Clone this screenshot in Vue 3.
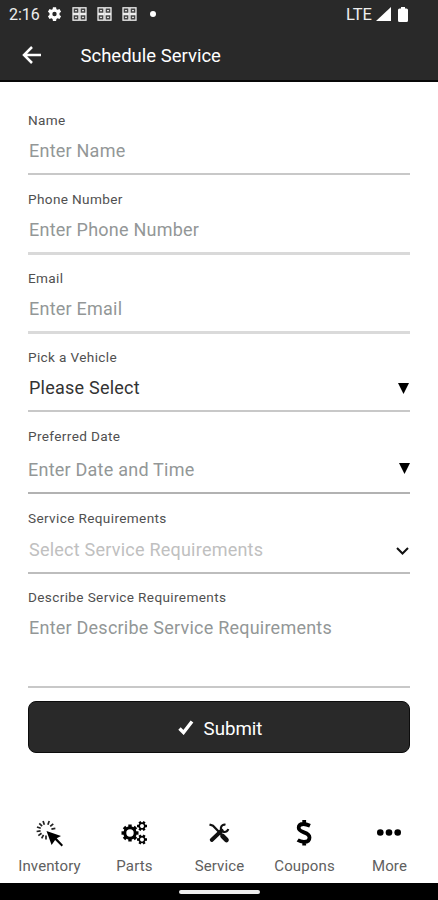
<script setup>
const fields = [
  { key: 'name', label: 'Name', value: 'Enter Name' },
  { key: 'phone', label: 'Phone Number', value: 'Enter Phone Number' },
  { key: 'email', label: 'Email', value: 'Enter Email' },
  { key: 'vehicle', label: 'Pick a Vehicle', value: 'Please Select', icon: 'triangle' },
  { key: 'date', label: 'Preferred Date', value: 'Enter Date and Time', icon: 'triangle' },
  { key: 'service', label: 'Service Requirements', value: 'Select Service Requirements', icon: 'chevron' },
  { key: 'describe', label: 'Describe Service Requirements', value: 'Enter Describe Service Requirements' },
]
const rays = [20, 50, 80, 180, 207, 234, 261, 288, 315, 342]
const gearTeeth = [0, 45, 90, 135, 180, 225, 270, 315]
const smallTeeth = [30, 90, 150, 210, 270, 330]
</script>

<template>
  <div class="screen">
    <header class="top">
      <div class="status">
        <span class="time">2:16</span>
        <svg class="cog" viewBox="0 0 24 24"><path fill="#fff" fill-rule="evenodd" d="M9.500 1h5l.6 3.200 1.800 1 3.100-1.100 2.500 4.300-2.500 2.100v2.900l2.500 2.200-2.500 4.300-3.100-1.100-1.800 1-.6 3.200h-5l-.6-3.200-1.800-1L4 19.900l-2.500-4.300L4 13.400v-2.900L1.500 8.400 4 4.100l3.100 1.100 1.800-1zM12 8.500a3.500 3.500 0 1 0 0 7 3.500 3.500 0 0 0 0-7z" /></svg>
        <svg v-for="n in 3" :key="n" class="notif" viewBox="0 0 15 14">
          <g fill="#444" stroke="#eee" stroke-width="1.300">
            <rect x="1" y=".8" width="6" height="5.600" /><rect x="8" y=".8" width="6" height="5.600" />
            <rect x="1" y="7.600" width="6" height="5.600" /><rect x="8" y="7.600" width="6" height="5.600" />
          </g>
          <path stroke="#ddd" stroke-width="1.300" d="M3 3.700h2M10 3.700h2M3 10.300h2M10 10.300h2" />
        </svg>
        <span class="dot"></span>
        <span class="lte">LTE</span>
        <svg class="signal" viewBox="0 0 15 14"><path fill="#fff" d="M15 0v14H0z" /></svg>
        <svg class="battery" viewBox="0 0 10 15"><path fill="#fff" d="M3 0h4v1.500h1.500Q10 1.500 10 3v10.500Q10 15 8.500 15h-7Q0 15 0 13.500V3q0-1.500 1.500-1.500H3z" /></svg>
      </div>
      <div class="bar">
        <svg class="back" viewBox="0 0 20 18"><path d="M19 9H2.500M10 1 2 9l8 8" fill="none" stroke="#fff" stroke-width="2.500" /></svg>
        <h1>Schedule Service</h1>
      </div>
    </header>

    <main>
      <div v-for="f in fields" :key="f.key" class="field" :class="f.key">
        <div class="label"><span>{{ f.label }}</span></div>
        <div class="value">
          <span>{{ f.value }}</span>
          <svg v-if="f.icon === 'triangle'" class="tri" viewBox="0 0 11 11"><path d="M0 0h11L5.500 11z" /></svg>
          <svg v-if="f.icon === 'chevron'" class="chev" viewBox="0 0 13 8"><path d="m1 1 5.500 5.500L12 1" fill="none" stroke="#111" stroke-width="2" /></svg>
        </div>
      </div>
      <button class="submit">
        <svg viewBox="0 0 16 15"><path d="m1.500 8.500 4 4L14 1.500" fill="none" stroke="#fff" stroke-width="3.400" /></svg>
        <span>Submit</span>
      </button>
    </main>

    <nav>
      <div class="tab">
        <svg class="icon" viewBox="0 0 32 32">
          <g stroke="#222" stroke-width="1.700">
            <path v-for="r in rays" :key="r" d="M0-5.500V-9.500" :transform="`translate(13 13) rotate(${r})`" />
          </g>
          <path d="m13.500 14 14.500 5-4.300 2.300 6.300 6.800-1.400 1.400-6.500-6.600-3.500 5z" />
        </svg>
        <span>Inventory</span>
      </div>
      <div class="tab">
        <svg class="icon" viewBox="0 0 32 32">
          <circle cx="12" cy="16" r="5.200" fill="none" stroke="#000" stroke-width="3" />
          <path v-for="t in gearTeeth" :key="t" d="M-1.700-5.500v-3h3.400v3z" :transform="`translate(12 16) rotate(${t})`" />
          <g v-for="y in [9, 22.500]" :key="y" :transform="`translate(24 ${y})`">
            <circle r="2.800" fill="none" stroke="#000" stroke-width="1.700" />
            <path v-for="t in smallTeeth" :key="t" d="M-1.200-3v-2h2.400v2z" :transform="`rotate(${t})`" />
          </g>
        </svg>
        <span>Parts</span>
      </div>
      <div class="tab">
        <svg class="icon" viewBox="0 0 32 32">
          <path d="m6.500 7.500 3.500 1.200 9 9.300" fill="none" stroke="#111" stroke-width="2.200" />
          <path d="m19.500 19 4 4" stroke="#111" stroke-width="4.600" stroke-linecap="round" />
          <path d="m8.700 23 10-9.500" stroke="#111" stroke-width="3.800" stroke-linecap="round" />
          <path d="M22.500 7.700a3.700 3.700 0 1 0 2.700 4.300" fill="none" stroke="#111" stroke-width="2.200" />
        </svg>
        <span>Service</span>
      </div>
      <div class="tab">
        <svg class="icon" viewBox="0 0 32 32"><path d="M22 8.700C19.500 7.600 17.500 7 15.500 7c-3 0-4.800 1.500-4.800 3.800 0 5.500 10.800 3.700 10.800 9.600 0 2.800-2.200 4.400-5.500 4.400-2.300 0-4.600-.7-6.300-1.800M16.200 3v4M16.200 24v4.500" fill="none" stroke="#000" stroke-width="3.800" /></svg>
        <span>Coupons</span>
      </div>
      <div class="tab">
        <svg class="icon" viewBox="0 0 32 32"><circle cx="7.300" cy="15.500" r="3.300" /><circle cx="16" cy="15.500" r="3.300" /><circle cx="24.700" cy="15.500" r="3.300" /></svg>
        <span>More</span>
      </div>
    </nav>
    <footer><div class="handle"></div></footer>
  </div>
</template>

<style>
body { margin: 0; background: #fff; }
</style>

<style scoped>
* { box-sizing: border-box; }
.screen { width: 438px; height: 900px; display: flex; flex-direction: column; background: #fff; font-family: Roboto, sans-serif; color: #222; overflow: hidden; }
svg { display: block; flex: none; }
.top { height: 82px; flex: none; background: #292929; border-bottom: 2px solid #080808; color: #fff; }
.status { height: 28px; display: flex; align-items: center; padding: 0 30px 0 9px; }
.time { font-size: 16px; width: 38px; white-space: nowrap; color: #eee; }
.cog { width: 15px; height: 16px; margin-right: 10px; }
.notif { width: 15px; height: 14px; margin-right: 10px; }
.dot { width: 6px; height: 6px; border-radius: 50%; background: #fff; margin-left: 3px; }
.lte { margin-left: auto; font-size: 16.500px; margin-right: 4px; color: #eee; }
.signal { width: 15px; height: 14px; margin-right: 7px; }
.battery { width: 10px; height: 15px; }
.bar { height: 54px; display: flex; align-items: center; padding-left: 22px; }
.back { width: 20px; height: 18px; margin-right: 38.500px; }
h1 { margin: 2px 0 0; font-size: 18.500px; font-weight: 400; white-space: nowrap; }
main { padding: 14px 28px 0; flex: 1; }
.field { height: 80px; border-bottom: 2px solid #c8c8c8; padding-top: 14px; }
.label { height: 20px; line-height: 20px; font-size: 13.600px; color: #505050; letter-spacing: .36px; white-space: nowrap; }
.value { height: 24px; margin-top: 9px; padding-left: 1px; display: flex; align-items: center; justify-content: space-between; font-size: 18px; line-height: 24px; color: #939797; letter-spacing: .23px; white-space: nowrap; }
.name { height: 79px; }
.phone { border-bottom: 3px solid #d9d9d9; }
.email { height: 79px; padding-top: 13px; border-bottom: 3px solid #dadada; }
.vehicle { height: 78px; padding-top: 13px; }
.vehicle .value { color: #333; }
.date { height: 82px; border-bottom-color: #b2b2b2; }
.date .value { margin-top: 12px; padding-left: 0; }
.date .tri { margin: -3px 0 0; }
.service { border-bottom-color: #bdbdbd; }
.service .value { margin-top: 10px; color: #c0c0c0; }
.describe { height: 114px; padding-top: 13px; }
.tri { width: 11px; height: 11px; margin-right: 1px; margin-top: 1px; }
.chev { width: 13px; height: 8px; margin-right: 1px; margin-top: 2px; }
.submit { width: 382px; height: 52px; margin-top: 13px; border: 1px solid #0c0c0c; border-radius: 8px; background: #292929; color: #fff; display: flex; align-items: center; justify-content: center; font: 400 18.700px Roboto, sans-serif; padding: 3px 0 0 2px; }
.submit svg { width: 16px; height: 15px; margin-right: 10px; margin-top: -2px; }
nav { height: 66px; flex: none; display: flex; padding: 0 7px 0 6px; }
.tab { flex: 1; display: flex; flex-direction: column; align-items: center; font-size: 15px; color: #606060; letter-spacing: .13px; white-space: nowrap; }
.icon { width: 32px; height: 32px; }
.tab span { line-height: 20px; margin-top: 7px; padding-left: 2px; }
footer { height: 17px; flex: none; background: #000; display: flex; justify-content: center; padding-top: 7px; }
.handle { width: 81px; height: 4px; border-radius: 2px; background: #eee; }
</style>
